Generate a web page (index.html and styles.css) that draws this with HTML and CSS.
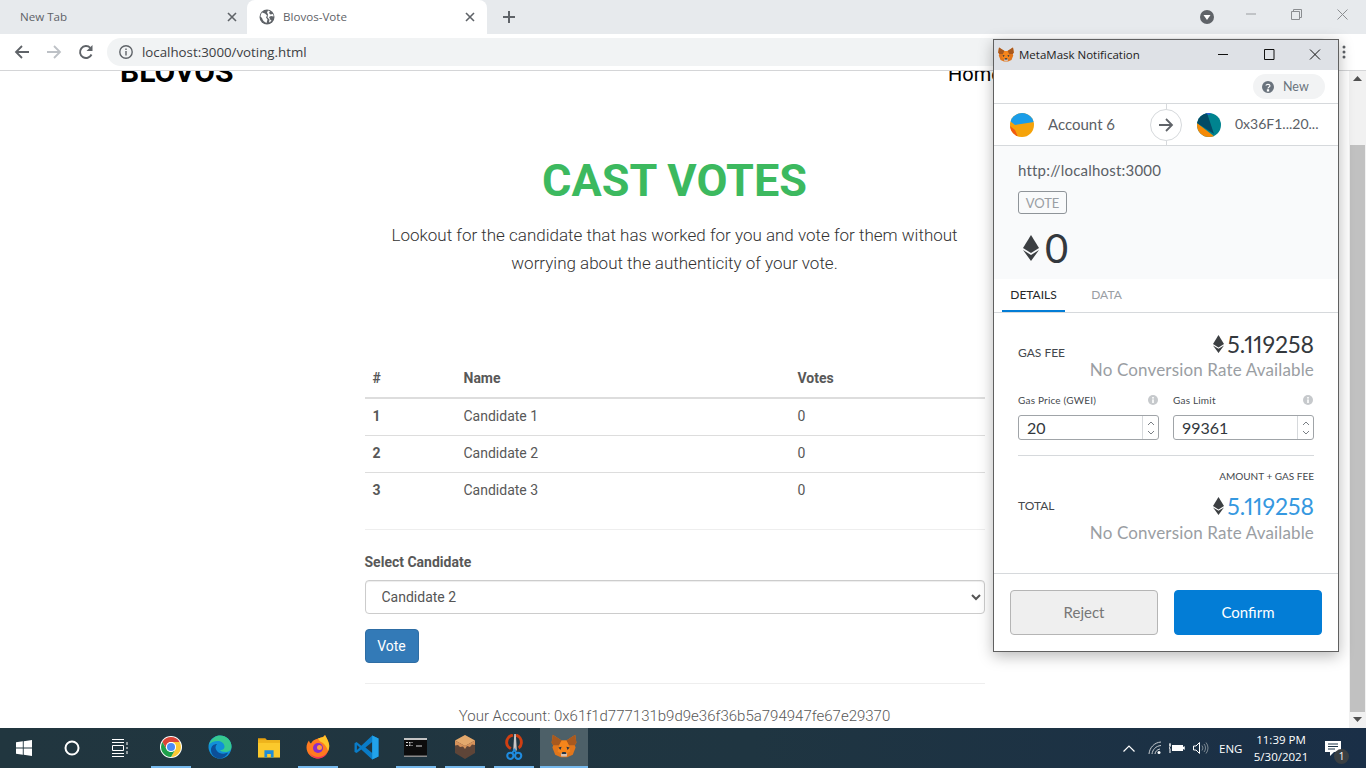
FILE: index.html
```html
<!DOCTYPE html>
<html lang="en">
<head>
<meta charset="utf-8">
<title>Blovos-Vote</title>
<link rel="stylesheet" href="styles.css">
</head>
<body>
<svg class="defs" width="0" height="0" aria-hidden="true">
  <symbol id="fox" viewBox="0 0 32 30">
    <polygon points="2,1 13,8 19,8 30,1 31.5,11 29.5,14 30.5,17 27,26 20,29 12,29 5,26 1.5,17 2.5,14 .5,11" fill="#e2761b"/>
    <polygon points="2,1 13,8 10,14 2.5,14 .5,11" fill="#a8591f"/>
    <polygon points="30,1 19,8 22,14 29.5,14 31.5,11" fill="#a8591f"/>
    <polygon points="13,8 19,8 22,14 24,22 20,24 12,24 8,22 10,14" fill="#f6851b"/>
    <polygon points="12,24 20,24 19.5,28 12.5,28" fill="#d7c1b3"/>
    <polygon points="14,22.5 18,22.5 19,25 13,25" fill="#233447"/>
    <polygon points="9,17 13,16 11.5,20" fill="#233447"/>
    <polygon points="23,17 19,16 20.5,20" fill="#233447"/>
  </symbol>
  <symbol id="eth" viewBox="0 0 16 26">
    <polygon points="8,0 16,13 8,18 0,13" fill="#3c3f42"/>
    <polygon points="0,15 8,20 16,15 8,26" fill="#3c3f42"/>
  </symbol>
  <symbol id="info" viewBox="0 0 10 10">
    <circle cx="5" cy="5" r="5" fill="#c6c9cc"/>
    <rect x="4.2" y="4.4" width="1.6" height="3.6" fill="#fff"/>
    <rect x="4.2" y="2" width="1.6" height="1.6" fill="#fff"/>
  </symbol>
</svg>

<div class="browser">
  <div class="tabstrip">
    <div class="tab">
      <span class="tab-title">New Tab</span>
      <svg class="tab-x" width="10" height="10" viewBox="0 0 10 10"><path d="M1 1l8 8M9 1l-8 8" stroke="#5f6368" stroke-width="1.6"/></svg>
    </div>
    <div class="tab tab-active">
      <svg class="globe" width="16" height="16" viewBox="0 0 16 16"><circle cx="8" cy="8" r="7.5" fill="#5f6368"/><path d="M3 3.5l3 1 2 2-1 2 1.5 2-1 3.5C5 13 3.5 11 3 9L1.5 7.5C1.7 5.8 2.2 4.5 3 3.5zM9 1.5l2 .8-1 1.7 1.5 1.5L14 5c.4.8.6 1.5.5 2.5L12 7l-2 1 1.5 3 1 .5c-.7 1-1.5 1.6-2.5 2l.5-3-2-2 .5-3L8 3.500z" fill="#fff"/></svg>
      <span class="tab-title">Blovos-Vote</span>
      <svg class="tab-x" width="10" height="10" viewBox="0 0 10 10"><path d="M1 1l8 8M9 1l-8 8" stroke="#5f6368" stroke-width="1.6"/></svg>
    </div>
    <svg class="tab-new" width="12" height="12" viewBox="0 0 12 12"><path d="M6 0v12M0 6h12" stroke="#5f6368" stroke-width="2"/></svg>
    <div class="caption">
      <svg class="profile" width="14" height="14" viewBox="0 0 14 14"><circle cx="7" cy="7" r="7" fill="#5f6368"/><path d="M3.500 5h7L7 10z" fill="#fff"/></svg>
      <svg class="cap-btn" width="10" height="10" viewBox="0 0 10 10"><path d="M0 5h10" stroke="#9a9da0"/></svg>
      <svg class="cap-btn" width="11" height="11" viewBox="0 0 11 11"><path d="M.5 2.500h8v8h-8zM2.500 2.500v-2h8v8h-2" fill="none" stroke="#8a8d90"/></svg>
      <svg class="cap-btn" width="11" height="11" viewBox="0 0 11 11"><path d="M.5.5l10 10M10.500.5l-10 10" stroke="#8a8d90"/></svg>
    </div>
  </div>

  <div class="toolbar">
    <svg class="nav-ico" width="16" height="16" viewBox="0 0 16 16"><path d="M15 8H2M8 2L2 8l6 6" fill="none" stroke="#5f6368" stroke-width="1.8"/></svg>
    <svg class="nav-ico" width="16" height="16" viewBox="0 0 16 16"><path d="M1 8h13M8 2l6 6-6 6" fill="none" stroke="#bdc1c6" stroke-width="1.8"/></svg>
    <svg class="nav-ico" width="16" height="16" viewBox="0 0 16 16"><path d="M13.500 10.500A6 6 0 1 1 12.300 3.800" fill="none" stroke="#5f6368" stroke-width="1.900"/><path d="M14.500 1v6h-6z" fill="#5f6368"/></svg>
    <div class="omnibox">
      <svg width="14" height="14" viewBox="0 0 14 14"><circle cx="7" cy="7" r="6.200" fill="none" stroke="#5f6368" stroke-width="1.400"/><path d="M6.300 6h1.400v4.500H6.300zM6.300 3.500h1.400v1.400H6.300z" fill="#5f6368"/></svg>
      <span class="url">localhost:3000/voting.html</span>
    </div>
    <svg class="kebab" width="4" height="14" viewBox="0 0 4 14"><circle cx="2" cy="2" r="1.500" fill="#5f6368"/><circle cx="2" cy="7" r="1.500" fill="#5f6368"/><circle cx="2" cy="12" r="1.500" fill="#5f6368"/></svg>
  </div>

  <div class="viewport">
    <main class="page">
      <header class="site-head">
        <span class="brand">BLOVOS</span>
        <span class="nav-link">Home</span>
      </header>
      <section class="hero">
        <h1>CAST VOTES</h1>
        <p>Lookout for the candidate that has worked for you and vote for them without worrying about the authenticity of your vote.</p>
      </section>
      <section class="panel">
        <table class="votes">
          <thead>
            <tr><th class="c-id">#</th><th class="c-name">Name</th><th>Votes</th></tr>
          </thead>
          <tbody>
            <tr><th>1</th><td>Candidate 1</td><td>0</td></tr>
            <tr><th>2</th><td>Candidate 2</td><td>0</td></tr>
            <tr><th>3</th><td>Candidate 3</td><td>0</td></tr>
          </tbody>
        </table>
        <hr class="rule rule-a">
        <label class="sel-label" for="cand">Select Candidate</label>
        <select class="sel" id="cand">
          <option>Candidate 1</option>
          <option selected>Candidate 2</option>
          <option>Candidate 3</option>
        </select>
        <button class="vote-btn" type="button">Vote</button>
        <hr class="rule rule-b">
        <p class="account">Your Account: 0x61f1d777131b9d9e36f36b5a794947fe67e29370</p>
      </section>
    </main>
    <div class="scrollbar">
      <svg width="9" height="5" viewBox="0 0 9 5"><path d="M4.500 0L9 5H0z" fill="#505050"/></svg>
      <div class="thumb"></div>
      <svg width="9" height="5" viewBox="0 0 9 5"><path d="M4.500 5L9 0H0z" fill="#505050"/></svg>
    </div>
  </div>
</div>

<footer class="taskbar">
  <div class="task task-sys">
    <svg width="16" height="16" viewBox="0 0 16 16"><path d="M0 2.300L6.800 1.300V7.500H0zM7.700 1.200L16 0V7.500H7.700zM0 8.500H6.800V14.700L0 13.700zM7.700 8.500H16V16L7.700 14.800z" fill="#fff"/></svg>
  </div>
  <div class="task task-sys">
    <svg width="16" height="16" viewBox="0 0 16 16"><circle cx="8" cy="8" r="6.500" fill="none" stroke="#fff" stroke-width="2"/></svg>
  </div>
  <div class="task task-sys">
    <svg width="16" height="18" viewBox="0 0 16 18"><path d="M0 .5h12M0 17.500h12M0 3.500h12M0 14.500h12M.5 6.500h11v5H.5zM15 3v3M15 8v2M15 12v3" fill="none" stroke="#fff"/></svg>
  </div>
  <div class="apps">
    <div class="task task-app on">
      <svg width="24" height="24" viewBox="0 0 24 24"><circle cx="12" cy="12" r="11" fill="#fff"/><path d="M3.340 7A10 10 0 0 1 20.660 7H12A5 5 0 0 0 7.670 14.500z" fill="#db4437"/><path d="M20.660 7A10 10 0 0 1 12 22L16.330 14.500A5 5 0 0 0 12 7z" fill="#fcc934"/><path d="M12 22A10 10 0 0 1 3.340 7L7.670 14.500A5 5 0 0 0 16.330 14.500z" fill="#1e9e4a"/><circle cx="12" cy="12" r="5" fill="#fff"/><circle cx="12" cy="12" r="4" fill="#4b8bf5"/></svg>
    </div>
    <div class="task task-app">
      <svg width="24" height="24" viewBox="0 0 24 24"><circle cx="12" cy="12" r="11.500" fill="#1190d8"/><path d="M1 10C3 3 8 .5 12 .5c6 0 11.500 4.500 11.500 11 0 4-3 5.500-6 5.500-3 0-5-1-5.500-2 2 0 4.500-.5 4.500-3.500 0-3-3-5.500-6.500-5.500C6 6 2.500 7.500 1 10z" fill="#36c990"/><path d="M12 23.500C6 23.500 3 19 3 15c0-4 3-6 6-6-2 2-2 5 0 7 2 2.500 6 3.500 9.500 2 .8-.3 1.500-.5 1.500 0-2 3-5 5.500-8 5.500z" fill="#0c4f98"/></svg>
    </div>
    <div class="task task-app">
      <svg width="22" height="21" viewBox="0 0 24 22"><path d="M0 1h8l2 2h-10z" fill="#e8a10c"/><path d="M0 3h24v19H0z" fill="#fbc92c"/><path d="M0 3h24v3H0z" fill="#eeb31c"/><path d="M7 22v-8h10v8h-3v-4h-4v4z" fill="#1f8cd8"/></svg>
    </div>
    <div class="task task-app on">
      <svg width="24" height="24" viewBox="0 0 24 24"><path d="M19 0c1 2 3 5 4 9 1.500 7-4 14.500-11 14.500C5 23.500.5 18 .5 12.500.5 10 1.500 7 3 5.500 3.300 7 4 8 5 8.500 6 6 9 4 12 3.500c2-1 5.500-1 7-3.500z" fill="#ff7a1f"/><path d="M19 0c1 2 3 5 4 9 .5 2.500 0 5-1 7-1-4-4-8-7-9-1-.3-2-2-3-3.500 2-1 5.500-.5 7-3.500z" fill="#ffc52b"/><circle cx="12" cy="13" r="5" fill="#8a2bc9"/><circle cx="13.500" cy="12.500" r="2.500" fill="#ff9a3c"/><path d="M3 17c3 5 9 6 14 4 2-1 3-2 4.500-4-1.500 4-5 6.500-9.500 6.500-4 0-7-2.500-9-6.500z" fill="#f22f5c"/></svg>
    </div>
    <div class="task task-app">
      <svg width="25" height="25" viewBox="0 0 24 24"><path d="M17.500.5L23.500 3.300V20.700L17.500 23.500 7 13.800 2.500 17.300.5 16.200V7.800L2.500 6.700 7 10.200zM17.500 6.700L11 12l6.500 5.300zM2.800 9.500V14.500L5.500 12z" fill="#0a7cc7"/><path d="M17.500.5L23.500 3.300V20.700L17.500 23.500z" fill="#22a3ea"/></svg>
    </div>
    <div class="task task-app on">
      <svg width="23" height="19" viewBox="0 0 23 19"><rect width="23" height="19" fill="#0c0c0c"/><rect width="23" height="2" fill="#c4c4c4"/><rect y="17.500" width="23" height="1.500" fill="#8b8b8b"/><path d="M2 4.500h2M2 7.500h2M5 4.500h1.500M5 6h1.500M5 7.500h1.500M7.500 4.500h1M7.500 7.500h1M12 8h6" stroke="#d8d8d8"/></svg>
    </div>
    <div class="task task-app on">
      <svg width="22" height="24" viewBox="0 0 20 24"><polygon points="10,0 20,5.500 20,18 10,24 0,18 0,5.500" fill="#5e4538"/><polygon points="10,0 20,5.500 10,11 0,5.500" fill="#e3a96d"/><polygon points="0,5.500 10,11 20,5.500 20,10 17,9.500 15,12 12,11 10,14 8,11.500 5,12 3,10 0,10.500" fill="#d6925a"/></svg>
    </div>
    <div class="task task-app on">
      <svg width="18" height="27" viewBox="0 0 16 26"><path d="M7 1C3 2 .5 5 1 9c.3 2.500 2 4 4 5" fill="none" stroke="#cf3f12" stroke-width="2.800"/><path d="M10 1c3 1 5.500 4 5 8-.2 2-1 3.500-2.500 4.500" fill="none" stroke="#cf3f12" stroke-width="2.800"/><path d="M9 0L8 16M9 0l1 16" stroke="#c9c9c9" stroke-width="1.500"/><circle cx="4.500" cy="21" r="3" fill="none" stroke="#1f8ce0" stroke-width="2"/><circle cx="12" cy="21" r="3" fill="none" stroke="#1f8ce0" stroke-width="2"/><path d="M6 18.500l3-4M10.500 18.500l-3-4" stroke="#1f8ce0" stroke-width="1.800"/></svg>
    </div>
    <div class="task task-app task-active">
      <svg width="26" height="24"><use href="#fox"/></svg>
    </div>
  </div>
  <div class="tray">
    <svg class="t-chev" width="12" height="7" viewBox="0 0 12 7"><path d="M.5 6.500L6 1l5.500 5.500" fill="none" stroke="#fff" stroke-width="1.200"/></svg>
    <svg class="t-wifi" width="14" height="14" viewBox="0 0 14 14"><path d="M1 13C1.500 7 6 1.500 13 1M4 13c.5-4 3.500-8 9-8.500M7 13c.3-2.500 2-4.500 5-5" fill="none" stroke="#c8ccd0"/><circle cx="11" cy="11.500" r="1.500" fill="#fff"/></svg>
    <svg class="t-batt" width="16" height="10" viewBox="0 0 16 10"><path d="M3 2h11v6H3z" fill="#fff"/><path d="M14.500 4H16v2h-1.500zM0 2h2M1 0v4M0 4l1 2v4" stroke="#fff" fill="none"/></svg>
    <svg class="t-vol" width="16" height="12" viewBox="0 0 16 12"><path d="M.5 4h2.500L6.500.5v11L3 8H.5z" fill="none" stroke="#fff"/><path d="M9 3.500a4 4 0 0 1 0 5M11 2a6 6 0 0 1 0 8M13 .5a8.500 8.500 0 0 1 0 11" fill="none" stroke="#7d8a93"/></svg>
    <span class="t-lang">ENG</span>
    <div class="t-clock"><span>11:39 PM</span><span>5/30/2021</span></div>
    <div class="t-note">
      <svg width="16" height="15" viewBox="0 0 16 15"><path d="M0 0h16v11h-7l-4 4v-4H0z" fill="#fff"/><path d="M3 3h10M3 5.500h10M3 8h7" stroke="#1c3448"/></svg>
      <span class="t-badge">1</span>
    </div>
  </div>
</footer>

<div class="mm-window">
  <div class="mm-title">
    <svg class="mm-fox" width="16" height="15"><use href="#fox"/></svg>
    <span class="mm-title-text">MetaMask Notification</span>
    <div class="mm-controls">
      <svg width="14" height="11" viewBox="0 0 14 11"><path d="M2 5.500h10" stroke="#111" stroke-width="1"/></svg>
      <svg width="14" height="11" viewBox="0 0 14 11"><path d="M2.500.5h9.500v10h-9.500z" fill="none" stroke="#111"/></svg>
      <svg width="14" height="11" viewBox="0 0 14 11"><path d="M2 .5l10 10M12 .5l-10 10" stroke="#111"/></svg>
    </div>
  </div>
  <div class="mm-newbar">
    <div class="mm-pill">
      <svg width="12" height="12" viewBox="0 0 12 12"><circle cx="6" cy="6" r="6" fill="#6a737d"/><path d="M4 4.500C4 3 8 3 8 4.700c0 1.300-2 1.300-2 2.800M5.400 8.700h1.200V10H5.400z" fill="none" stroke="#fff" stroke-width="1.100"/></svg>
      <span>New</span>
    </div>
  </div>
  <div class="mm-accounts">
    <div class="mm-from">
      <svg width="24" height="24" viewBox="0 0 24 24"><defs><clipPath id="c1"><circle cx="12" cy="12" r="12"/></clipPath></defs><g clip-path="url(#c1)"><rect width="24" height="24" fill="#f5a30a"/><path d="M0 0h24v9L5 12 0 8z" fill="#1b9de8"/><path d="M0 13l5 4 3 7H0z" fill="#f25a10"/></g></svg>
      <span>Account 6</span>
    </div>
    <div class="mm-arrow">
      <svg width="16" height="16" viewBox="0 0 16 16"><path d="M1 8h13M8 2l6 6-6 6" fill="none" stroke="#5f6368" stroke-width="1.800"/></svg>
    </div>
    <div class="mm-to">
      <svg width="24" height="24" viewBox="0 0 24 24"><defs><clipPath id="c2"><circle cx="12" cy="12" r="12"/></clipPath></defs><g clip-path="url(#c2)"><rect width="24" height="24" fill="#00838f"/><path d="M0 10L18 24H0z" fill="#f58a07"/><path d="M0 10V4L8 0h2l7 21z" fill="#024b66"/><path d="M8 0h6l-2 2z" fill="#2a5bd7"/></g></svg>
      <span>0x36F1...20...</span>
    </div>
  </div>
  <div class="mm-summary">
    <div class="mm-origin">http://localhost:3000</div>
    <div class="mm-action">VOTE</div>
    <div class="mm-amount">
      <svg width="16" height="26"><use href="#eth"/></svg>
      <span>0</span>
    </div>
  </div>
  <div class="mm-tabs">
    <span class="mm-tab mm-tab-on">DETAILS</span>
    <span class="mm-tab">DATA</span>
  </div>
  <div class="mm-details">
    <div class="mm-row mm-row-fee">
      <span class="mm-key">GAS FEE</span>
      <div class="mm-vals">
        <div class="mm-val"><svg width="11" height="18"><use href="#eth"/></svg><span>5.119258</span></div>
        <div class="mm-noconv">No Conversion Rate Available</div>
      </div>
    </div>
    <div class="mm-gas">
      <div class="mm-field">
        <div class="mm-field-head"><span>Gas Price (GWEI)</span><svg width="10" height="10"><use href="#info"/></svg></div>
        <div class="mm-input"><span class="mm-input-val">20</span><span class="mm-spin"><svg width="8" height="14" viewBox="0 0 8 14"><path d="M1 4l3-3 3 3M1 10l3 3 3-3" fill="none" stroke="#7a7f85"/></svg></span></div>
      </div>
      <div class="mm-field">
        <div class="mm-field-head"><span>Gas Limit</span><svg width="10" height="10"><use href="#info"/></svg></div>
        <div class="mm-input"><span class="mm-input-val">99361</span><span class="mm-spin"><svg width="8" height="14" viewBox="0 0 8 14"><path d="M1 4l3-3 3 3M1 10l3 3 3-3" fill="none" stroke="#7a7f85"/></svg></span></div>
      </div>
    </div>
    <hr class="mm-hr">
    <div class="mm-sum-label">AMOUNT + GAS FEE</div>
    <div class="mm-row mm-row-total">
      <span class="mm-key">TOTAL</span>
      <div class="mm-vals">
        <div class="mm-val mm-val-blue"><svg width="11" height="18"><use href="#eth"/></svg><span>5.119258</span></div>
        <div class="mm-noconv">No Conversion Rate Available</div>
      </div>
    </div>
  </div>
  <div class="mm-footer">
    <button class="mm-btn mm-reject" type="button">Reject</button>
    <button class="mm-btn mm-confirm" type="button">Confirm</button>
  </div>
</div>
</body>
</html>
```
FILE: styles.css
```css
* { box-sizing: border-box; }
html, body { margin: 0; padding: 0; height: 768px; overflow: hidden; }
body { position: relative; display: flex; flex-direction: column; width: 1366px; background: #fff; font-family: Roboto, "Liberation Sans", sans-serif; }
.defs { position: absolute; }
svg { display: block; flex: none; }

.browser { flex: 1; display: flex; flex-direction: column; min-height: 0; }
.tabstrip { height: 34px; flex: none; background: #e7eaed; display: flex; align-items: stretch; font-family: "Open Sans", "Liberation Sans", sans-serif; font-size: 11.6px; color: #5f6368; }
.tab { width: 243px; margin-right: 4px; display: flex; align-items: center; padding: 0 6px 0 20px; }
.tab-active { width: 240px; margin-right: 0; background: #fff; border-radius: 8px 8px 0 0; padding: 0 12px; }
.tab-title { flex: 1; margin-top: -2px; }
.globe { margin-right: 8px; }
.tab-new { align-self: center; margin-left: 16px; }
.caption { margin-left: auto; display: flex; align-items: center; padding-right: 18px; }
.profile { margin-right: 32px; }
.cap-btn { margin-left: 35px; margin-top: -6px; }
.profile + .cap-btn { margin-left: 0; }

.toolbar { height: 37px; flex: none; background: #fff; border-bottom: 1px solid #d4d5d7; display: flex; align-items: center; padding: 0 0 1px 14px; }
.nav-ico { margin-right: 16px; }
.nav-ico:nth-child(3) { margin-right: 13px; }
.omnibox { width: 1226px; height: 28px; border-radius: 14px; background: #f1f3f4; display: flex; align-items: center; padding-left: 12px; gap: 9px; }
.url { font-family: "Open Sans", "Liberation Sans", sans-serif; font-size: 13.3px; color: #3c4043; }
.kebab { margin-left: 9px; }

.viewport { flex: 1; min-height: 0; display: flex; overflow: hidden; }
.page { flex: 1; min-width: 0; overflow: hidden; color: #585858; }
.site-head { height: 40px; margin-top: -24px; display: flex; justify-content: space-between; align-items: flex-end; padding: 0 0 0 120px; color: #000; }
.brand { font-size: 30px; font-weight: 700; line-height: 30px; }
.nav-link { font-size: 20px; line-height: 26px; width: 401px; }
.hero { text-align: center; padding-top: 68px; width: 620px; margin: 0 auto; }
.hero h1 { margin: 0; font-size: 45px; font-weight: 700; line-height: 52px; color: #3cb95f; }
.hero p { margin: 14px 0 0; font-size: 17px; font-weight: 300; line-height: 28px; color: #333; }
.panel { width: 620px; margin: 82.6px auto 0; font-size: 14px; }
.votes { width: 100%; border-collapse: collapse; table-layout: fixed; }
.votes th, .votes td { padding: 7px 8px 9px; text-align: left; height: 37px; line-height: 20px; border-top: 1px solid #ddd; }
.votes thead th { padding: 8px; border-top: 0; border-bottom: 2px solid #ddd; height: 38px; }
.votes tbody tr:first-child th, .votes tbody tr:first-child td { border-top: 0; }
.c-id { width: 91px; }
.c-name { width: 334px; }
.rule { border: 0; border-top: 1px solid #eee; margin: 0; }
.rule-a { margin-top: 20px; }
.sel-label { display: block; margin-top: 22px; font-weight: 700; line-height: 20px; }
.sel { display: block; width: 100%; height: 34px; margin-top: 8px; padding: 6px 12px; font: 14px Roboto, sans-serif; color: #555; background: #fff; border: 1px solid #ccc; border-radius: 4px; box-shadow: inset 0 1px 1px rgba(0,0,0,.075); }
.vote-btn { display: block; margin-top: 15px; width: 54px; height: 34px; padding: 0; font: 14px Roboto, sans-serif; color: #fff; background: #337ab7; border: 1px solid #2e6da4; border-radius: 4px; }
.rule-b { margin-top: 20px; }
.account { margin: 22px 0 0; text-align: center; font-size: 15px; font-weight: 300; line-height: 20px; white-space: nowrap; }

.scrollbar { width: 17px; flex: none; background: #f1f1f1; display: flex; flex-direction: column; align-items: center; padding: 5px 0 6px; }
.thumb { width: 15px; flex: 1; background: #c1c1c1; margin: 64px 0 5px; }

.taskbar { height: 40px; flex: none; background: linear-gradient(90deg, #21363f 0, #1f3541 55%, #1a2f47 100%); display: flex; align-items: stretch; color: #fff; font-family: "Open Sans", "Liberation Sans", sans-serif; }
.task { display: flex; align-items: center; justify-content: center; }
.task-sys { width: 48px; }
.apps { display: flex; margin-left: 3px; }
.task-app { width: 49px; position: relative; padding: 0 2px 2px 0; }
.task-app.on::after { content: ""; position: absolute; left: 4px; right: 5px; bottom: 0; height: 2px; background: #76b9ed; }
.task-active { width: 48px; margin-left: 1px; padding-right: 0; background: #4d6068; border-bottom: 2px solid #76b9ed; }
.tray { margin-left: auto; display: flex; align-items: center; width: 266px; }
.t-chev { margin-left: 23px; }
.t-wifi { margin-left: 13px; }
.t-batt { margin-left: 7px; }
.t-vol { margin-left: 8px; }
.t-lang { margin-left: 10px; width: 26px; font-size: 11.5px; }
.t-clock { width: 72px; display: flex; flex-direction: column; align-items: center; font-size: 11.5px; line-height: 17px; }
.t-note { position: relative; margin-left: 8px; }
.t-badge { position: absolute; left: 9px; top: 8px; width: 15px; height: 15px; border-radius: 50%; background: #3a3f42; font-size: 10px; line-height: 15px; text-align: center; }

.mm-window { position: absolute; left: 993px; top: 39px; width: 346px; height: 613px; background: #fff; border: 1px solid #606060; box-shadow: 0 4px 14px rgba(0,0,0,.28); display: flex; flex-direction: column; font-family: Lato, "Liberation Sans", sans-serif; color: #24272a; }
.mm-title { height: 30px; flex: none; background: #dee1e6; display: flex; align-items: center; padding: 0 0 1px 4px; font-family: "Open Sans", sans-serif; font-size: 11.5px; color: #222; }
.mm-title-text { margin-left: 5px; }
.mm-controls { margin-left: auto; display: flex; gap: 32px; padding-right: 16px; }
.mm-newbar { height: 33px; flex: none; display: flex; justify-content: flex-end; align-items: center; padding: 0 13px 0 0; }
.mm-pill { width: 72px; height: 25px; border-radius: 13px; background: #f2f3f4; display: flex; align-items: center; gap: 9px; padding-left: 9px; font-size: 12.5px; color: #6a737d; }
.mm-accounts { height: 43px; flex: none; border-top: 1px solid #d6d9dc; border-bottom: 1px solid #d6d9dc; display: flex; align-items: center; position: relative; font-size: 15px; color: #5b6066; }
.mm-from { width: 156px; display: flex; align-items: center; gap: 14px; padding-left: 16px; }
.mm-from span, .mm-to span { margin-top: -2px; }
.mm-arrow { width: 32px; height: 32px; border-radius: 50%; border: 1px solid #d6d9dc; background: #fff; display: flex; align-items: center; justify-content: center; position: relative; }
.mm-arrow::before, .mm-arrow::after { content: ""; position: absolute; left: 15px; width: 1px; height: 5px; background: #d6d9dc; }
.mm-arrow::before { top: -6px; }
.mm-arrow::after { bottom: -6px; }
.mm-to { display: flex; align-items: center; gap: 14px; margin-left: 15px; white-space: nowrap; font-size: 14px; }
.mm-summary { height: 133px; flex: none; background: #f9fafb; padding: 15px 24px 0; }
.mm-origin { font-size: 15px; letter-spacing: .2px; line-height: 18px; color: #5b6066; }
.mm-action { display: inline-flex; align-items: center; justify-content: center; width: 49px; height: 23px; margin-top: 12px; border: 1px solid #8f9499; border-radius: 3px; font-size: 13px; color: #9a9ea3; }
.mm-amount { display: flex; align-items: center; gap: 6px; margin-top: 12px; padding-left: 5px; font-size: 40px; font-weight: 400; line-height: 44px; color: #33383d; }
.mm-tabs { height: 34px; flex: none; border-bottom: 1px solid #d6d9dc; display: flex; padding-left: 8px; font-size: 12px; }
.mm-tab { display: flex; align-items: center; justify-content: center; width: 63px; height: 33px; margin-right: 10px; padding-bottom: 2px; color: #9a9ea3; }
.mm-tab-on { color: #24272a; box-shadow: inset 0 -2px 0 #037dd6; }
.mm-details { flex: 1; min-height: 0; padding: 0 24px; }
.mm-row { display: flex; justify-content: space-between; align-items: flex-start; }
.mm-row-fee { padding-top: 16px; }
.mm-row-fee .mm-key { margin-top: 16px; }
.mm-row-total { padding-top: 8px; }
.mm-row-total .mm-key { margin-top: 7px; }
.mm-row-total .mm-noconv { margin-top: 1px; }
.mm-key { font-size: 12px; line-height: 16px; color: #44484d; }
.mm-vals { display: flex; flex-direction: column; align-items: flex-end; }
.mm-val { display: flex; align-items: center; gap: 3px; font-size: 23px; line-height: 30px; font-variant-numeric: proportional-nums; color: #33383d; }
.mm-val-blue span { color: #3598e0; }
.mm-noconv { font-size: 17px; letter-spacing: .15px; line-height: 22px; color: #9a9ea3; }
.mm-gas { display: flex; gap: 14px; margin-top: 10px; }
.mm-field { flex: 1; }
.mm-field-head { height: 18px; display: flex; align-items: center; justify-content: space-between; padding-right: 1px; font-size: 10px; letter-spacing: .2px; color: #44484d; }
.mm-input { height: 25px; margin-top: 6px; border: 1px solid #a0a4a8; border-radius: 3px; display: flex; align-items: stretch; font-size: 16px; color: #33383d; }
.mm-input-val { flex: 1; padding-left: 8px; line-height: 23px; }
.mm-spin { width: 16px; border-left: 1px solid #d6d9dc; display: flex; align-items: center; justify-content: center; }
.mm-hr { border: 0; border-top: 1px solid #d6d9dc; margin: 15px 0 0; }
.mm-sum-label { margin-top: 14px; text-align: right; font-size: 10px; line-height: 13px; color: #44484d; }
.mm-footer { height: 78px; flex: none; border-top: 1px solid #d6d9dc; display: flex; gap: 16px; padding: 16px 16px 0; }
.mm-btn { width: 148px; height: 45px; border-radius: 4px; font-family: Lato, "Liberation Sans", sans-serif; font-size: 15px; padding: 0 0 2px; }
.mm-reject { background: #efefef; border: 1px solid #b5b5b5; color: #777; }
.mm-confirm { background: #037dd6; border: 1px solid #037dd6; color: #fff; }
```
